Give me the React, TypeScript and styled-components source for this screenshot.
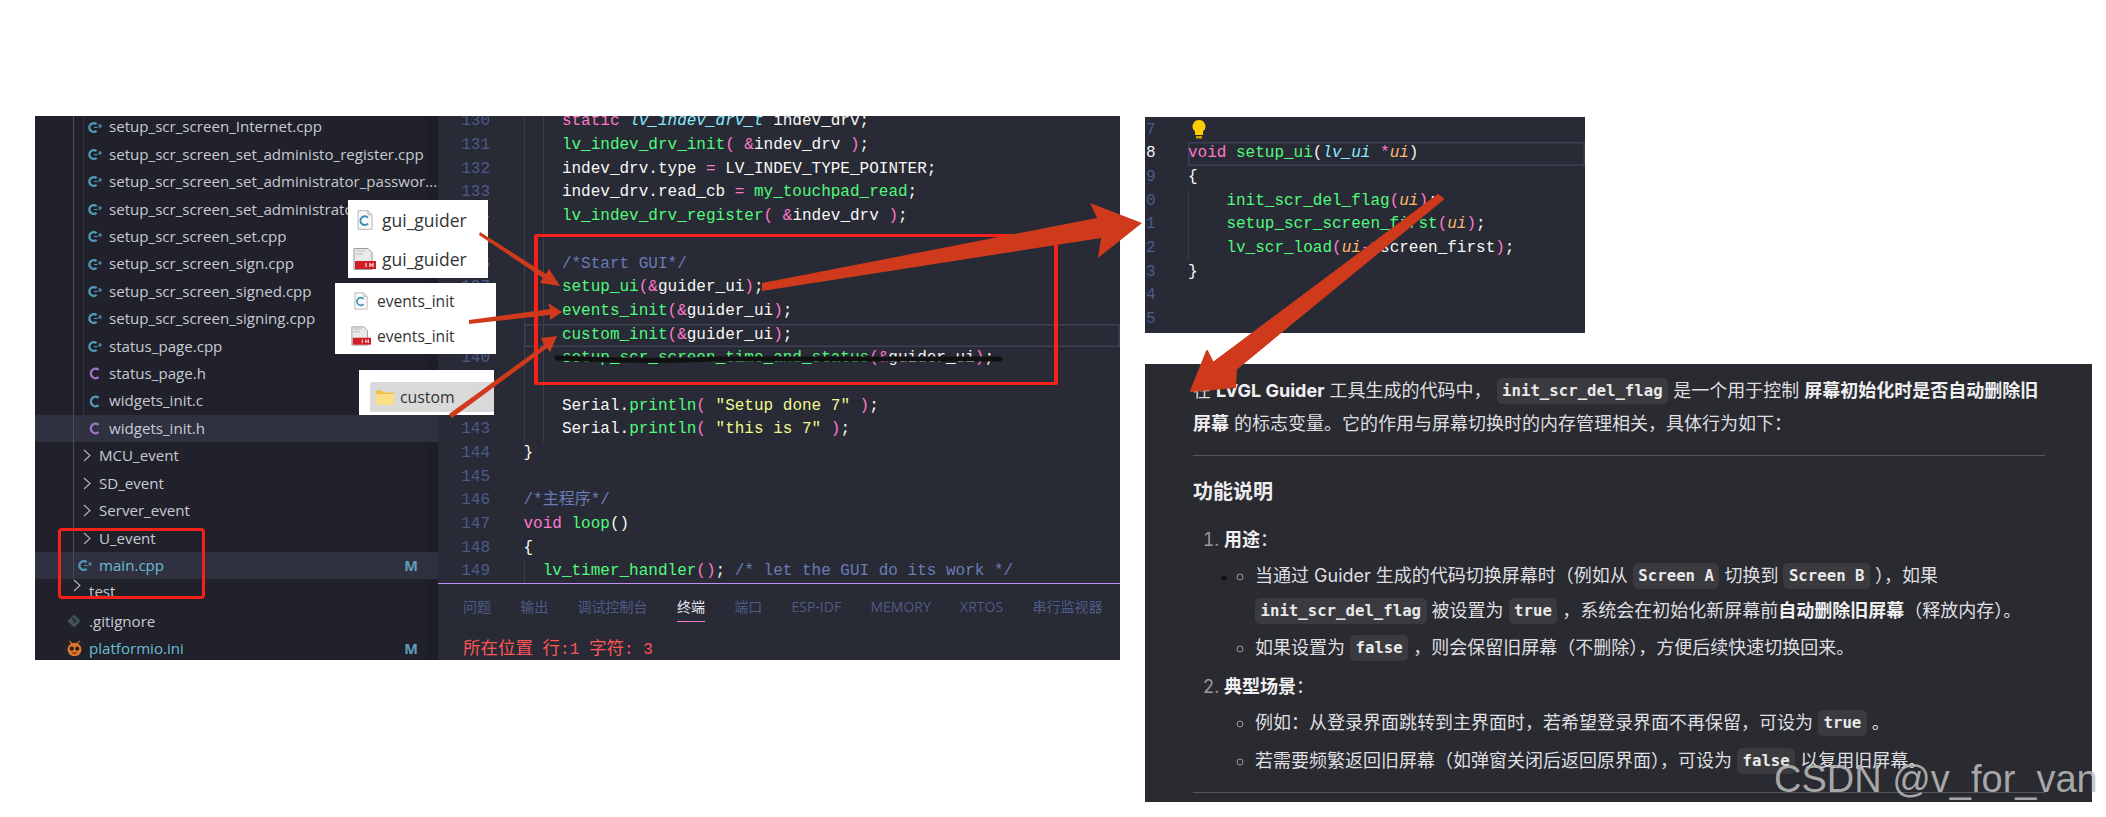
import React from "react";
import styled, { createGlobalStyle, css } from "styled-components";

const Global = createGlobalStyle`
  html, body { margin: 0; padding: 0; background: #fff; }
  * { box-sizing: border-box; }
`;

const SANS = `"Open Sans", "Noto Sans CJK SC", sans-serif`;
const MONO = `"Liberation Mono", "Noto Sans CJK SC", monospace`;
const CHAT = `Inter, "Noto Sans CJK SC", sans-serif`;

const Stage = styled.div`
  position: relative;
  width: 2106px;
  height: 817px;
  overflow: hidden;
  background: #fff;
  display: flex;
  align-items: flex-start;
  gap: 25px;
  padding: 116px 0 0 35px;
`;

/* ---------- IDE ---------- */
const Ide = styled.div`
  width: 1085px;
  height: 544px;
  display: flex;
  overflow: hidden;
  flex: none;
`;
const Explorer = styled.div`
  width: 403px;
  flex: none;
  height: 100%;
  overflow: hidden;
  background: linear-gradient(#1d1e27, #1d1e27) right top / 12px 100% no-repeat, #20212b;
  font: 15.1px/27.42px ${SANS};
  color: #c8cad3;
`;
const Tree = styled.div`
  margin-top: -2.6px;
`;
const guideBg = (d: number, active?: boolean) => {
  const layers: string[] = [];
  if (d >= 1) layers.push("linear-gradient(#4b4c57,#4b4c57) 38px 0 / 1px 100% no-repeat");
  if (d >= 2) layers.push("linear-gradient(#30313d,#30313d) 48px 0 / 1px 100% no-repeat");
  layers.push(active ? "#2f3140" : "transparent");
  return layers.join(",");
};
const Row = styled.div<{ $pad: number; $guides?: number; $active?: boolean; $git?: boolean }>`
  height: 27.42px;
  display: flex;
  align-items: center;
  white-space: nowrap;
  padding-left: ${(p) => p.$pad}px;
  background: ${(p) => guideBg(p.$guides ?? 0, p.$active)};
  color: ${(p) => (p.$git ? "#6cbcd4" : "inherit")};
`;
const ClippedRow = styled(Row)`
  height: 18px;
  margin-bottom: 10.4px;
  align-items: flex-start;
  line-height: 24px;
  overflow: hidden;
`;
const IconSlot = styled.span<{ $w: number }>`
  width: ${(p) => p.$w}px;
  flex: none;
  display: flex;
  align-items: center;
`;
const Badge = styled.span`
  margin-left: auto;
  margin-right: 20px;
  font-weight: 700;
  font-size: 14.5px;
  color: #5f9fb8;
`;

const Editor = styled.div`
  flex: 1;
  min-width: 0;
  background: #282a36;
  display: flex;
  flex-direction: column;
  overflow: hidden;
`;
const CodeArea = styled.div`
  height: 468px;
  flex: none;
  overflow: hidden;
  border-bottom: 1px solid #bd93f9;
  font: 16px/23.7px ${MONO};
`;
const Lines = styled.div`
  margin-top: -5.6px;
`;
const Line = styled.div`
  display: flex;
  height: 23.7px;
`;
const Num = styled.span<{ $w: number; $cur?: boolean }>`
  width: ${(p) => p.$w}px;
  flex: none;
  text-align: right;
  color: ${(p) => (p.$cur ? "#f1f1f1" : "#4c5a8c")};
`;
const Code = styled.span<{ $gap: number; $guides?: number; $step?: number; $cur?: boolean }>`
  flex: 1;
  margin-left: ${(p) => p.$gap}px;
  white-space: pre;
  color: #f8f8f2;
  ${(p) =>
    p.$guides
      ? css`
          background: linear-gradient(#3b3d4c, #3b3d4c) 0 0 / 1px 100% no-repeat
            ${p.$guides > 1 ? css`, linear-gradient(#3b3d4c, #3b3d4c) ${p.$step ?? 19}px 0 / 1px 100% no-repeat` : ""};
        `
      : ""}
  ${(p) => (p.$cur ? "box-shadow: inset 0 0 0 1.5px #3d4052;" : "")}
`;
type TokenKind = "g" | "p" | "c" | "y" | "m" | "o";
const tokenColor: Record<TokenKind, string> = {
  g: "#50fa7b",
  p: "#ff79c6",
  c: "#8be9fd",
  y: "#f1fa8c",
  m: "#6a7bb5",
  o: "#ffb86c",
};
const T = styled.span<{ $k: TokenKind; $i?: boolean }>`
  color: ${(p) => tokenColor[p.$k]};
  font-style: ${(p) => (p.$i ? "italic" : "normal")};
`;
const G = ({ children }: { children: React.ReactNode }) => <T $k="g">{children}</T>;
const P = ({ children }: { children: React.ReactNode }) => <T $k="p">{children}</T>;

const Terminal = styled.div`
  flex: 1;
  display: flex;
  flex-direction: column;
  padding-left: 25px;
`;
const Tabs = styled.div`
  display: flex;
  gap: 29.3px;
  height: 36px;
  padding-top: 12px;
  font: 14px/21px ${SANS};
  color: #4f5b85;
`;
const Tab = styled.span<{ $on?: boolean }>`
  height: 24.5px;
  color: ${(p) => (p.$on ? "#e8e8ee" : "inherit")};
  ${(p) => (p.$on ? "box-shadow: 0 1px 0 #ff79c6;" : "")}
`;
const Status = styled.div`
  margin-top: 17px;
  font: 16px/24px ${MONO};
  color: #ff5555;
  white-space: pre;
`;
const Han = styled.span`
  font-size: 17.5px;
`;

/* ---------- right column ---------- */
const RightCol = styled.div`
  display: flex;
  flex-direction: column;
  gap: 31px;
  margin-top: 1px;
`;
const CodePanel = styled.div`
  width: 440px;
  height: 216px;
  background: #282a36;
  overflow: hidden;
  padding: 1.5px 0 0 1px;
  font: 16px/23.7px ${MONO};
  display: flex;
  flex-direction: column;
`;
const Bulb = styled.svg`
  display: block;
  margin: 1px 0 0 4px;
`;

const Chat = styled.div`
  width: 947px;
  height: 438px;
  background: #2a2b30;
  color: #dfdfe1;
  padding: 9.5px 47px 0 48px;
  font: 18px/33px ${CHAT};
  overflow: hidden;
`;
const Para = styled.p`
  margin: 0;
`;
const Strong = styled.strong`
  font-weight: 700;
  color: #f0f0f2;
`;
const InlineCode = styled.code<{ $flush?: boolean }>`
  display: inline-block;
  height: 26px;
  margin: 0 5px 0 ${(p) => (p.$flush ? 0 : 5)}px;
  padding: 0 5.5px;
  border-radius: 5px;
  background: #3b3b3f;
  color: #e9e9ea;
  font: 700 15.7px/26px "DejaVu Sans Mono", monospace;
  vertical-align: 1px;
`;
const Rule = styled.hr<{ $top: number; $bottom?: number }>`
  border: 0;
  height: 1px;
  background: #55565b;
  margin: ${(p) => p.$top}px 0 ${(p) => p.$bottom ?? 0}px;
`;
const Heading = styled.h3`
  margin: 0 0 9.5px;
  font: 700 20px/42px ${CHAT};
  color: #eeeef0;
`;
const Ordered = styled.ol`
  margin: 0;
  padding-left: 31px;
  & > li::marker {
    color: #98989c;
  }
`;
const Item = styled.li<{ $gap?: number }>`
  margin-top: ${(p) => p.$gap ?? 0}px;
`;
const Bullets = styled.ul`
  margin: 2.5px 0 0;
  padding-left: 31px;
  list-style: circle;
  & > li::marker {
    color: #98989c;
  }
`;
const Bullet = styled.li<{ $gap?: number; $lh?: number }>`
  margin-top: ${(p) => p.$gap ?? 0}px;
  line-height: ${(p) => p.$lh ?? 35}px;
`;

/* ---------- overlays ---------- */
const Card = styled.div<{ $x: number; $y: number; $w: number; $h: number }>`
  position: absolute;
  left: ${(p) => p.$x}px;
  top: ${(p) => p.$y}px;
  width: ${(p) => p.$w}px;
  height: ${(p) => p.$h}px;
  background: #fff;
  color: #333;
  font-family: ${SANS};
  display: flex;
  flex-direction: column;
`;
const CardRow = styled.div<{ $size: number; $h: number; $pad: number; $gap: number }>`
  height: ${(p) => p.$h}px;
  display: flex;
  align-items: center;
  gap: ${(p) => p.$gap}px;
  padding-left: ${(p) => p.$pad}px;
  font-size: ${(p) => p.$size}px;
`;
const FolderChip = styled.div`
  margin: 12px 0 0 11px;
  height: 30px;
  background: #d9d9d9;
  border-radius: 2px;
  display: flex;
  align-items: center;
  gap: 6px;
  padding-left: 6px;
  font-size: 15.8px;
`;
const RedBox = styled.div<{ $x: number; $y: number; $w: number; $h: number; $r?: number; $bw?: number }>`
  position: absolute;
  left: ${(p) => p.$x}px;
  top: ${(p) => p.$y}px;
  width: ${(p) => p.$w}px;
  height: ${(p) => p.$h}px;
  border: 3.5px solid #f8201a;
  border-left-width: ${(p) => p.$bw ?? 3.5}px;
  border-right-width: ${(p) => p.$bw ?? 3.5}px;
  border-radius: ${(p) => p.$r ?? 2}px;
  pointer-events: none;
`;
const Ink = styled.svg`
  position: absolute;
  inset: 0;
  pointer-events: none;
`;
const Watermark = styled.div`
  position: absolute;
  left: 1774px;
  top: 757px;
  font: 38px/44px "Liberation Sans", sans-serif;
  color: rgba(190, 190, 190, 0.85);
  white-space: nowrap;
`;

/* ---------- icons ---------- */
const CppIcon = () => (
  <svg width="15" height="13" viewBox="0 0 15 13" fill="none">
    <path d="M8.6 3.1A4.4 4.4 0 1 0 8.6 9.9" stroke="#519aba" strokeWidth="2.4" />
    <path d="M6 6.5h3.6M10 5h4M12 3v4" stroke="#519aba" strokeWidth="1.2" />
  </svg>
);
const CIcon = ({ color }: { color: string }) => (
  <svg width="11" height="13" viewBox="0 0 11 13" fill="none">
    <path d="M9.6 2.9A4.7 4.7 0 1 0 9.6 10.1" stroke={color} strokeWidth="2.4" />
  </svg>
);
const Chevron = () => (
  <svg width="8" height="13" viewBox="0 0 8 13" fill="none">
    <path d="M1 1l6 5.5L1 12" stroke="#b4b5bb" strokeWidth="1.1" />
  </svg>
);
const GitIcon = () => (
  <svg width="14" height="14" viewBox="0 0 14 14">
    <path d="M7 0.5L13.5 7L7 13.5L0.5 7Z" fill="#41535b" />
    <path d="M5 3.5L9.5 8M7 6v3.5" stroke="#20212b" strokeWidth="1.2" />
  </svg>
);
const PioIcon = () => (
  <svg width="15" height="17" viewBox="0 0 15 17">
    <path d="M2.5 0.8L5 4M12.5 0.8L10 4" stroke="#e0762c" strokeWidth="1.2" />
    <ellipse cx="7.5" cy="9.5" rx="7" ry="6.8" fill="#e0762c" />
    <ellipse cx="4.8" cy="8.6" rx="2" ry="2.2" fill="#2a1c14" />
    <ellipse cx="10.2" cy="8.6" rx="2" ry="2.2" fill="#2a1c14" />
    <path d="M5.5 13h4" stroke="#2a1c14" strokeWidth="1" />
  </svg>
);
const CFile = ({ w, h }: { w: number; h: number }) => (
  <svg width={w} height={h} viewBox="0 0 16 20" fill="none" style={{ flex: "none" }}>
    <path d="M1 .7h10l4 4v14.6H1Z" fill="#f8f8f8" stroke="#b5b5b5" />
    <path d="M11 .7v4h4" stroke="#b5b5b5" />
    <path d="M11 7.6A4.4 4.4 0 1 0 11 13.6" stroke="#3d8fb0" strokeWidth="1.9" />
  </svg>
);
const HFile = ({ w, h }: { w: number; h: number }) => (
  <svg width={w} height={h} viewBox="0 0 23 22" style={{ flex: "none" }}>
    <path d="M1 .5h14l4 4v17H1Z" fill="#e9e9e9" stroke="#9a9a9a" />
    <path d="M3 3h9M3 6h7" stroke="#bcbcbc" strokeWidth="1.2" />
    <rect x="2" y="13" width="21" height="8" fill="#cf1f24" />
    <path d="M13 15v4M17 15v4M17 17h3M20 15v4" stroke="#fff" strokeWidth="1" />
  </svg>
);
const Folder = () => (
  <svg width="18" height="15" viewBox="0 0 18 15" style={{ flex: "none" }}>
    <path d="M0 1.5A1 1 0 0 1 1 .5h5l1.5 2H17a1 1 0 0 1 1 1V14a1 1 0 0 1-1 1H1a1 1 0 0 1-1-1Z" fill="#f0c040" />
    <rect x="0" y="4" width="18" height="11" rx="1" fill="#fbdf86" />
  </svg>
);

const cppFiles = [
  "setup_scr_screen_Internet.cpp",
  "setup_scr_screen_set_administo_register.cpp",
  "setup_scr_screen_set_administrator_passwor...",
  "setup_scr_screen_set_administrator.cpp",
  "setup_scr_screen_set.cpp",
  "setup_scr_screen_sign.cpp",
  "setup_scr_screen_signed.cpp",
  "setup_scr_screen_signing.cpp",
  "status_page.cpp",
];
const folders = ["MCU_event", "SD_event", "Server_event", "U_event"];
const tabs = ["问题", "输出", "调试控制台", "终端", "端口", "ESP-IDF", "MEMORY", "XRTOS", "串行监视器"];

type EditorLine = { n: number; guides: number; cur?: boolean; code: React.ReactNode };
const editorLines: EditorLine[] = [
  { n: 130, guides: 2, code: <>{"    "}<P>static</P> <T $k="c" $i>lv_indev_drv_t</T> indev_drv;</> },
  { n: 131, guides: 2, code: <>{"    "}<G>lv_indev_drv_init</G><P>(</P> <P>&amp;</P>indev_drv <P>)</P>;</> },
  { n: 132, guides: 2, code: <>{"    "}indev_drv.type <P>=</P> LV_INDEV_TYPE_POINTER;</> },
  { n: 133, guides: 2, code: <>{"    "}indev_drv.read_cb <P>=</P> <G>my_touchpad_read</G>;</> },
  { n: 134, guides: 2, code: <>{"    "}<G>lv_indev_drv_register</G><P>(</P> <P>&amp;</P>indev_drv <P>)</P>;</> },
  { n: 135, guides: 2, code: "" },
  { n: 136, guides: 2, code: <>{"    "}<T $k="m">/*Start GUI*/</T></> },
  { n: 137, guides: 2, code: <>{"    "}<G>setup_ui</G><P>(&amp;</P>guider_ui<P>)</P>;</> },
  { n: 138, guides: 2, code: <>{"    "}<G>events_init</G><P>(&amp;</P>guider_ui<P>)</P>;</> },
  { n: 139, guides: 2, cur: true, code: <>{"    "}<G>custom_init</G><P>(&amp;</P>guider_ui<P>)</P>;</> },
  { n: 140, guides: 2, code: <>{"    "}<G>setup_scr_screen_time_and_status</G><P>(&amp;</P>guider_ui<P>)</P>;</> },
  { n: 141, guides: 2, code: "" },
  { n: 142, guides: 2, code: <>{"    "}Serial.<G>println</G><P>(</P> <T $k="y">"Setup done 7"</T> <P>)</P>;</> },
  { n: 143, guides: 2, code: <>{"    "}Serial.<G>println</G><P>(</P> <T $k="y">"this is 7"</T> <P>)</P>;</> },
  { n: 144, guides: 0, code: "}" },
  { n: 145, guides: 0, code: "" },
  { n: 146, guides: 0, code: <T $k="m">/*主程序*/</T> },
  { n: 147, guides: 0, code: <><P>void</P> <G>loop</G>()</> },
  { n: 148, guides: 0, code: "{" },
  { n: 149, guides: 1, code: <>{"  "}<G>lv_timer_handler</G><P>()</P>; <T $k="m">/* let the GUI do its work */</T></> },
];

const uiI = (s: string) => <T $k="o" $i>{s}</T>;
const panelLines: { n: string; guides: number; cur?: boolean; code: React.ReactNode }[] = [
  {
    n: "7",
    guides: 0,
    code: (
      <Bulb width="14" height="20" viewBox="0 0 14 20">
        <path d="M7 0a6.5 6.5 0 0 0-4 11.6V15h8v-3.4A6.5 6.5 0 0 0 7 0Z" fill="#ffcc00" />
        <rect x="4" y="16" width="6" height="2.5" fill="#c9a000" />
      </Bulb>
    ),
  },
  { n: "8", guides: 0, cur: true, code: <><P>void</P> <G>setup_ui</G>(<T $k="c" $i>lv_ui</T> <P>*</P>{uiI("ui")})</> },
  { n: "9", guides: 0, code: "{" },
  { n: "0", guides: 1, code: <>{"    "}<G>init_scr_del_flag</G><P>(</P>{uiI("ui")}<P>)</P>;</> },
  { n: "1", guides: 1, code: <>{"    "}<G>setup_scr_screen_first</G><P>(</P>{uiI("ui")}<P>)</P>;</> },
  { n: "2", guides: 1, code: <>{"    "}<G>lv_scr_load</G><P>(</P>{uiI("ui")}<P>-&gt;</P>screen_first<P>)</P>;</> },
  { n: "3", guides: 0, code: "}" },
  { n: "4", guides: 0, code: "" },
  { n: "5", guides: 0, code: "" },
];

const ORANGE = "#cf3a1c";

export default function App() {
  return (
    <Stage>
      <Global />
      <Ide>
        <Explorer>
          <Tree>
            {cppFiles.map((f) => (
              <Row key={f} $pad={53} $guides={2}>
                <IconSlot $w={21}><CppIcon /></IconSlot>
                {f}
              </Row>
            ))}
            <Row $pad={54} $guides={2}>
              <IconSlot $w={20}><CIcon color="#a074c4" /></IconSlot>status_page.h
            </Row>
            <Row $pad={54} $guides={2}>
              <IconSlot $w={20}><CIcon color="#519aba" /></IconSlot>widgets_init.c
            </Row>
            <Row $pad={54} $guides={2} $active>
              <IconSlot $w={20}><CIcon color="#a074c4" /></IconSlot>widgets_init.h
            </Row>
            {folders.map((f) => (
              <Row key={f} $pad={48} $guides={1}>
                <IconSlot $w={16}><Chevron /></IconSlot>
                {f}
              </Row>
            ))}
            <Row $pad={43} $guides={1} $active $git>
              <IconSlot $w={21}><CppIcon /></IconSlot>main.cpp<Badge>M</Badge>
            </Row>
            <ClippedRow $pad={38}>
              <IconSlot $w={16}><Chevron /></IconSlot>test
            </ClippedRow>
            <Row $pad={32}>
              <IconSlot $w={22}><GitIcon /></IconSlot>.gitignore
            </Row>
            <Row $pad={32} $git>
              <IconSlot $w={22}><PioIcon /></IconSlot>platformio.ini<Badge>M</Badge>
            </Row>
          </Tree>
        </Explorer>
        <Editor>
          <CodeArea>
            <Lines>
              {editorLines.map((l) => (
                <Line key={l.n}>
                  <Num $w={52}>{l.n}</Num>
                  <Code $gap={33.5} $guides={l.guides} $cur={l.cur}>{l.code}</Code>
                </Line>
              ))}
            </Lines>
          </CodeArea>
          <Terminal>
            <Tabs>
              {tabs.map((t) => (
                <Tab key={t} $on={t === "终端"}>{t}</Tab>
              ))}
            </Tabs>
            <Status>
              <Han>所在位置</Han> <Han>行</Han>:1 <Han>字符</Han>: 3
            </Status>
          </Terminal>
        </Editor>
      </Ide>

      <RightCol>
        <CodePanel>
          {panelLines.map((l) => (
            <Line key={l.n}>
              <Num $w={9.6} $cur={l.cur}>{l.n}</Num>
              <Code $gap={32.4} $guides={l.guides} $cur={l.cur}>{l.code}</Code>
            </Line>
          ))}
        </CodePanel>
        <Chat>
          <Para>
            在 <Strong>LVGL Guider</Strong> 工具生成的代码中，<InlineCode>init_scr_del_flag</InlineCode>是一个用于控制 <Strong>屏幕初始化时是否自动删除旧屏幕</Strong> 的标志变量。它的作用与屏幕切换时的内存管理相关，具体行为如下：
          </Para>
          <Rule $top={15.5} $bottom={15} />
          <Heading>功能说明</Heading>
          <Ordered>
            <Item>
              <Strong>用途</Strong>：
              <Bullets>
                <Bullet>
                  当通过 Guider 生成的代码切换屏幕时（例如从<InlineCode>Screen A</InlineCode>切换到<InlineCode>Screen B</InlineCode>），如果
                  <br />
                  <InlineCode $flush>init_scr_del_flag</InlineCode>被设置为<InlineCode>true</InlineCode>，系统会在初始化新屏幕前<Strong>自动删除旧屏幕</Strong>（释放内存）。
                </Bullet>
                <Bullet $gap={2}>
                  如果设置为<InlineCode>false</InlineCode>，则会保留旧屏幕（不删除），方便后续快速切换回来。
                </Bullet>
              </Bullets>
            </Item>
            <Item $gap={4.5}>
              <Strong>典型场景</Strong>：
              <Bullets>
                <Bullet>
                  例如：从登录界面跳转到主界面时，若希望登录界面不再保留，可设为<InlineCode>true</InlineCode>。
                </Bullet>
                <Bullet $gap={3}>
                  若需要频繁返回旧屏幕（如弹窗关闭后返回原界面），可设为<InlineCode>false</InlineCode>以复用旧屏幕。
                </Bullet>
              </Bullets>
            </Item>
          </Ordered>
          <Rule $top={14} />
        </Chat>
      </RightCol>

      <Card $x={348} $y={200} $w={140} $h={78}>
        <CardRow $size={17.5} $h={39} $pad={9} $gap={9}>
          <CFile w={16} h={20} />gui_guider
        </CardRow>
        <CardRow $size={17.5} $h={39} $pad={5} $gap={6}>
          <HFile w={23} h={22} />gui_guider
        </CardRow>
      </Card>
      <Card $x={335} $y={283} $w={161} $h={71}>
        <CardRow $size={15.6} $h={36} $pad={19} $gap={9}>
          <CFile w={14} h={18} />events_init
        </CardRow>
        <CardRow $size={15.6} $h={36} $pad={16} $gap={6}>
          <HFile w={20} h={20} />events_init
        </CardRow>
      </Card>
      <Card $x={359} $y={370} $w={135} $h={45}>
        <FolderChip>
          <Folder />custom
        </FolderChip>
      </Card>

      <RedBox $x={534} $y={233.5} $w={524} $h={151.5} $bw={4.5} />
      <RedBox $x={58} $y={528} $w={147} $h={71} $r={4} />

      <Ink width="2106" height="817" viewBox="0 0 2106 817">
        <path d="M557 358C620 361 660 361 720 359L1000 359" stroke="#111" strokeWidth="5" fill="none" strokeLinecap="round" />
        <polygon fill={ORANGE} points="480,232 546,274 549,269 560,286 540,283 543,278 479,235" />
        <polygon fill={ORANGE} points="469,320 550,309 548,303 562,312 550,320 550,315 469,324" />
        <polygon fill={ORANGE} points="449,414 544,345 541,338 557,336 550,352 547,348 452,418" />
        <polygon fill={ORANGE} points="762,283 1097,218 1090,203 1142,223 1098,258 1101,238 762,291" />
        <polygon fill={ORANGE} strokeLinejoin="round" stroke={ORANGE} strokeWidth="2" points="1438,195 1443,199 1236,369 1235,387 1191,391 1207,351 1213,363" />
        <ellipse cx="1224" cy="578" rx="3" ry="2" fill="#111" />
      </Ink>
      <Watermark>CSDN @v_for_van</Watermark>
    </Stage>
  );
}
